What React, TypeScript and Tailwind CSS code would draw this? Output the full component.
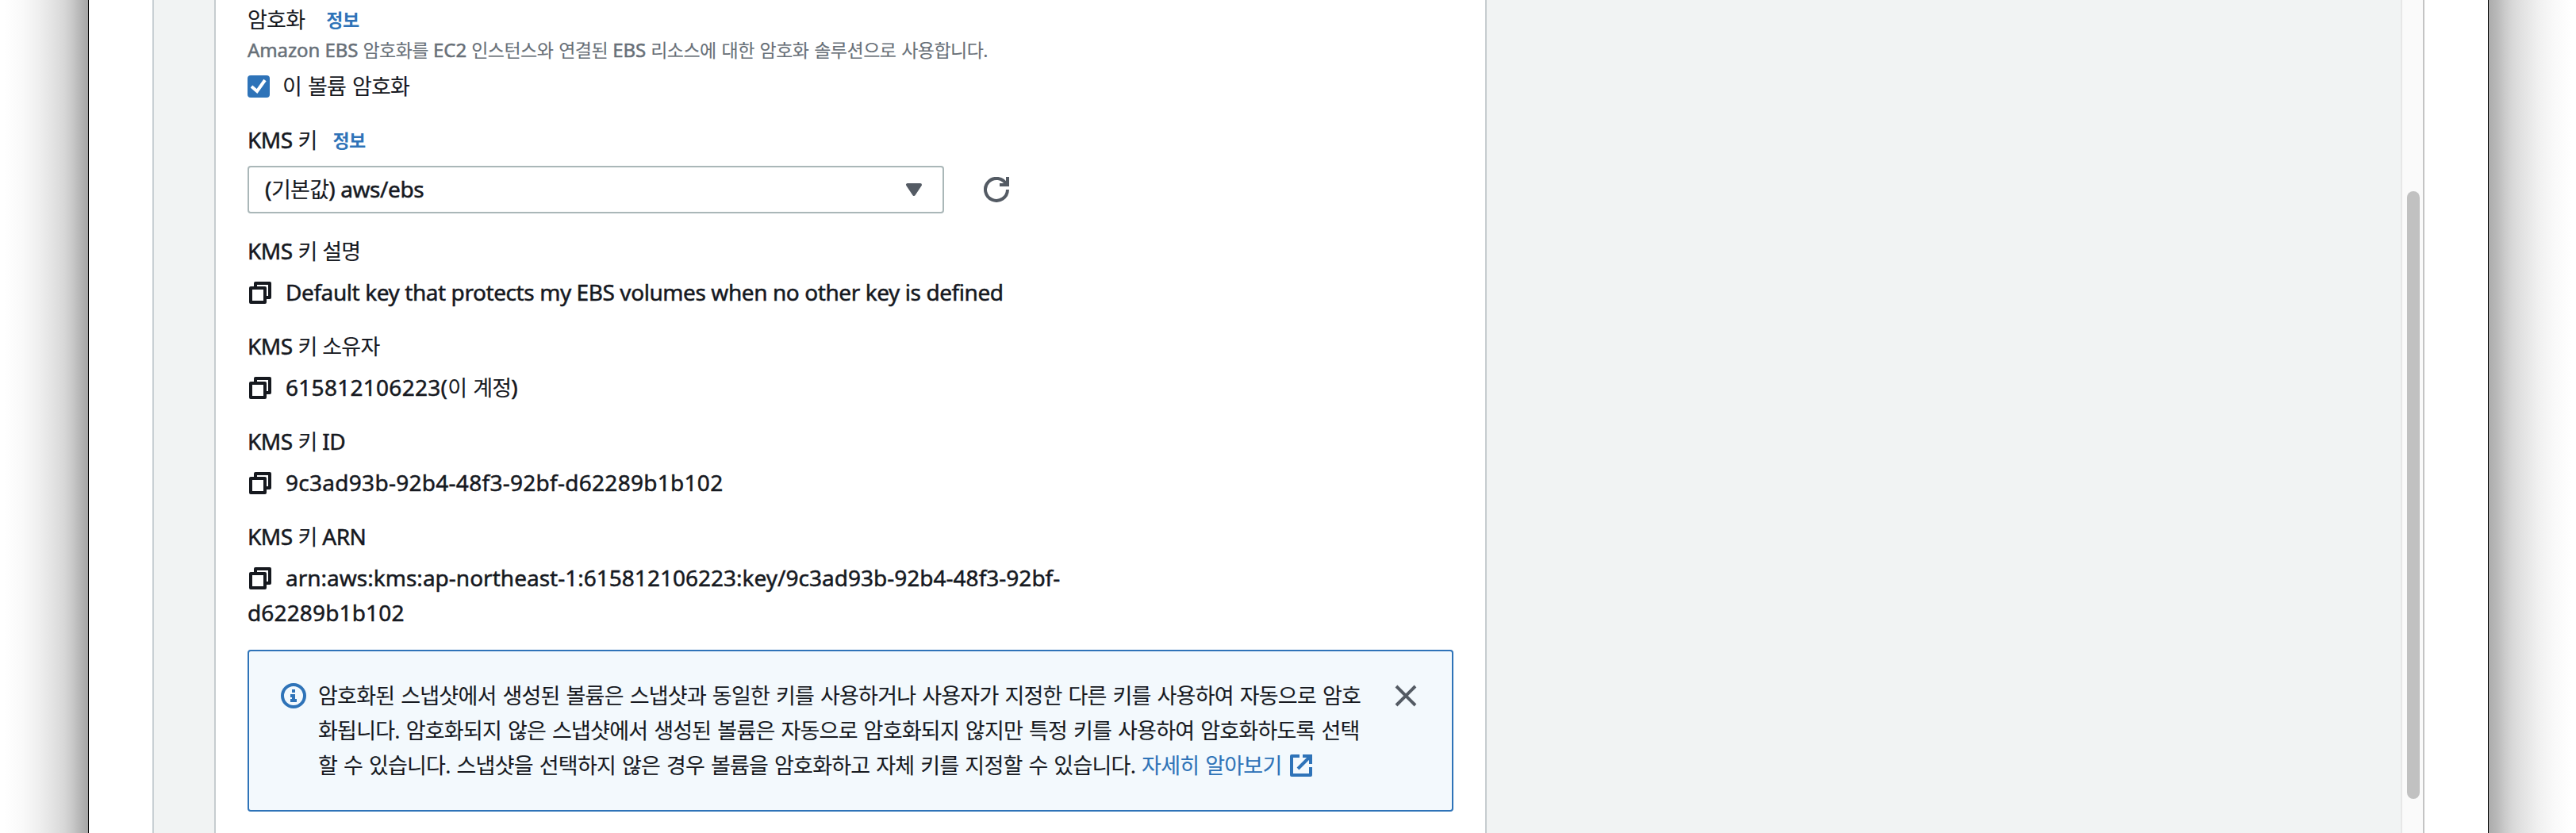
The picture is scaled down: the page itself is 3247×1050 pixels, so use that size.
import { useState, type ReactNode } from "react";

const kmsDetails = [
  { label: "설명", value: "Default key that protects my EBS volumes when no other key is defined", tracking: "mb-0.5 tracking-[-0.42px]" },
  { label: "소유자", value: "615812106223(", ko: "이 계정", tracking: "mb-0.5 tracking-[0.28px]" },
  { label: "ID", latin: true, value: "9c3ad93b-92b4-48f3-92bf-d62289b1b102", tracking: "mb-0.5 tracking-[0.28px]" },
  { label: "ARN", latin: true, value: "arn:aws:kms:ap-northeast-1:615812106223:key/9c3ad93b-92b4-48f3-92bf-", rest: "d62289b1b102", tracking: "mb-0.5 tracking-[0.01px]" },
];

// Hangul runs are set a little smaller than the latin text beside them
function Ko({ children }: { children: ReactNode }) {
  return <span className="text-[27px] tracking-[-0.76px] [word-spacing:1.6px] [-webkit-text-stroke:0.1px]">{children}</span>;
}

function KoSmall({ children }: { children: ReactNode }) {
  return <span className="text-[23px] tracking-[-0.52px] [word-spacing:1.3px] [-webkit-text-stroke:0.1px]">{children}</span>;
}

function InfoLink() {
  return (
    <a href="#" className="text-[23px] font-bold tracking-[-0.52px] text-[#2e73b8] [-webkit-text-stroke:0px]">
      정보
    </a>
  );
}

function CopyIcon() {
  return (
    <svg className="size-8 shrink-0" viewBox="0 0 16 16" fill="none" stroke="currentColor" strokeWidth="2" strokeLinejoin="round">
      <path d="M2 5h9v9H2z" />
      <path d="M5 5V2h9v9h-3" />
    </svg>
  );
}

export default function App() {
  const [checked, setChecked] = useState(true);
  const [open, setOpen] = useState(true);

  return (
    <div className="flex h-[1050px] w-[3247px] overflow-hidden bg-white font-['Noto_Sans','Noto_Sans_CJK_KR',sans-serif] text-[28px] leading-[44px] text-[#16191f] [-webkit-text-stroke:0.5px]">
      {/* Window shadow, left */}
      <div className="w-[111px] shrink-0 bg-[linear-gradient(to_left,#a6a6a6_0px,#b6b6b6_10px,#c9c9c9_20px,#d7d7d7_30px,#e1e1e1_42px,#efefef_62px,#f9f9f9_82px,#ffffff_106px)]" />

      <div className="flex w-[3026px] shrink-0 border-x border-black bg-white pr-20 pl-20">
        <div className="flex grow border-l-2 border-[#c9d0d4] bg-[#f1f3f3]">
          <div className="ml-[76px] w-[1604px] shrink-0 border-x-2 border-[#c6cccf] bg-white pt-[3px] pr-10 pl-10">
            {/* Encryption */}
            <div className="flex h-11 items-center gap-[27px] whitespace-nowrap">
              <Ko>암호화</Ko>
              <InfoLink />
            </div>
            <p className="h-8 text-[24px] leading-8 tracking-[-0.1px] whitespace-nowrap text-[#687078]">
              Amazon EBS <KoSmall>암호화를</KoSmall> EC2 <KoSmall>인스턴스와 연결된</KoSmall> EBS{" "}
              <KoSmall>리소스에 대한 암호화 솔루션으로 사용합니다.</KoSmall>
            </p>
            <label className="mt-2 flex h-11 items-center gap-4">
              <input type="checkbox" className="sr-only" checked={checked} onChange={() => setChecked(!checked)} />
              <svg className="size-7" viewBox="0 0 28 28" fill="none">
                <rect width="28" height="28" rx="4" fill="#2e73b8" />
                {checked && <path d="M5 14l7 6L22 6" stroke="#fff" strokeWidth="4" />}
              </svg>
              <Ko>이 볼륨 암호화</Ko>
            </label>

            {/* KMS key select */}
            <div className="mt-6 flex h-11 items-center gap-5 whitespace-nowrap">
              <span className="mb-0.5 tracking-[-0.5px]">
                KMS <Ko>키</Ko>
              </span>
              <InfoLink />
            </div>
            <div className="mt-2.5 flex h-[60px] items-center gap-[50px]">
              <button className="flex h-[60px] w-[878px] items-center justify-between rounded-[4px] border-2 border-[#aab7b8] bg-white pr-[20px] pl-5">
                <span className="mb-0.5 tracking-[-0.4px]">
                  (<Ko>기본값</Ko>) aws/ebs
                </span>
                <svg className="size-8" viewBox="0 0 16 16" fill="#545b64" stroke="#545b64" strokeWidth="2" strokeLinejoin="round">
                  <path d="M4 5h8l-4 6z" />
                </svg>
              </button>
              <button>
                <svg className="size-8" viewBox="0 0 16 16" fill="none" stroke="#545b64" strokeWidth="2">
                  <path d="M15 8a7 7 0 1 1-.7-3.1" />
                  <path d="M10 5h5V0" />
                </svg>
              </button>
            </div>

            {/* Key details */}
            <div className="mt-[26px] flex flex-col gap-6">
              {kmsDetails.map((d) => (
                <div key={d.label} className="flex flex-col gap-2 whitespace-nowrap">
                  <div className="h-11 leading-[42px] tracking-[-0.5px]">
                    KMS <Ko>키</Ko> {d.latin ? d.label : <Ko>{d.label}</Ko>}
                  </div>
                  <div>
                    <div className="flex h-11 items-center gap-4">
                      <CopyIcon />
                      <span className={d.tracking}>
                        {d.value}
                        {d.ko && <><Ko>{d.ko}</Ko>)</>}
                      </span>
                    </div>
                    {d.rest && <div className="h-11 leading-[42px] tracking-[0.15px]">{d.rest}</div>}
                  </div>
                </div>
              ))}
            </div>

            {/* Alert */}
            {open && (
              <div className="mt-6 flex h-[204px] w-[1520px] rounded-[4px] border-2 border-[#2e73b8] bg-[#f3f9fd] px-10 pt-[34px]">
                <svg className="mt-1.5 size-8 shrink-0" viewBox="0 0 16 16" fill="none" stroke="#2e73b8" strokeWidth="2">
                  <circle cx="8" cy="8" r="7" />
                  <path d="M8 11V8H6M10 11H6M8 6V4" />
                </svg>
                <p className="ml-[15px] h-[132px] w-[1357px] shrink-0 text-[27px] tracking-[-0.76px] whitespace-nowrap [word-spacing:1.6px] [-webkit-text-stroke:0.1px]">
                  암호화된 스냅샷에서 생성된 볼륨은 스냅샷과 동일한 키를 사용하거나 사용자가 지정한 다른 키를 사용하여 자동으로 암호
                  <br />
                  화됩니다. 암호화되지 않은 스냅샷에서 생성된 볼륨은 자동으로 암호화되지 않지만 특정 키를 사용하여 암호화하도록 선택
                  <br />
                  할 수 있습니다. 스냅샷을 선택하지 않은 경우 볼륨을 암호화하고 자체 키를 지정할 수 있습니다.{" "}
                  <a href="#" className="text-[#2e73b8]">
                    자세히 알아보기
                    <svg className="ml-[9px] inline size-8 align-[-6px]" viewBox="0 0 16 16" fill="none" stroke="currentColor" strokeWidth="2" strokeLinejoin="round">
                      <path d="M14 9v5H2V2h5" />
                      <path d="M9 2h5v5M6 10l8-8" strokeLinejoin="miter" />
                    </svg>
                  </a>
                </p>
                <button className="-ml-0.5 h-11 shrink-0" onClick={() => setOpen(false)}>
                  <svg className="size-8" viewBox="0 0 16 16" fill="none" stroke="#545b64" strokeWidth="2">
                    <path d="M2 2l12 12M14 2L2 14" />
                  </svg>
                </button>
              </div>
            )}
          </div>
        </div>

        {/* Scrollbar */}
        <div className="w-[30px] shrink-0 border-r-2 border-l-2 border-r-[#c4c4c4] border-l-[#e7e7e7] bg-[#fafafa] pt-[241px] pl-1.5">
          <div className="h-[766px] w-4 rounded-full bg-[#c1c1c1]" />
        </div>
      </div>

      {/* Window shadow, right */}
      <div className="grow bg-[linear-gradient(to_right,#acacac_0px,#b8b8b8_10px,#cacaca_20px,#d8d8d8_30px,#e2e2e2_42px,#f0f0f0_62px,#f9f9f9_82px,#ffffff_104px)]" />
    </div>
  );
}
